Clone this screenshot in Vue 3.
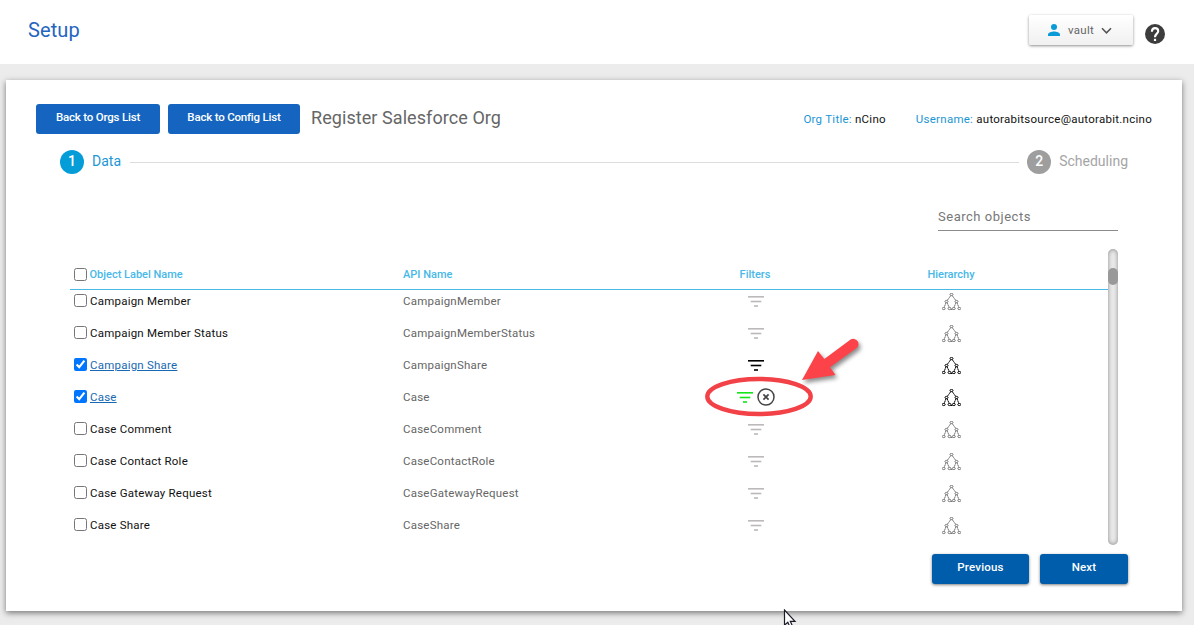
<script setup>
import { ref } from 'vue'

const search = ref('')
const rows = ref([
  { label: 'Campaign Member', api: 'CampaignMember', checked: false },
  { label: 'Campaign Member Status', api: 'CampaignMemberStatus', checked: false },
  { label: 'Campaign Share', api: 'CampaignShare', checked: true },
  { label: 'Case', api: 'Case', checked: true, filtered: true },
  { label: 'Case Comment', api: 'CaseComment', checked: false },
  { label: 'Case Contact Role', api: 'CaseContactRole', checked: false },
  { label: 'Case Gateway Request', api: 'CaseGatewayRequest', checked: false },
  { label: 'Case Share', api: 'CaseShare', checked: false },
])
const nodes = [[9.5, 1.5], [4.5, 8.5], [14.5, 8.5], [1.7, 15.5], [7.5, 15.5], [11.8, 15.5], [17.3, 15.5]]
</script>

<template>
  <div class="page">
    <header class="topbar">
      <h1 class="t-setup">Setup</h1>
      <div class="account">
        <button class="user">
          <svg class="person" width="12" height="12" viewBox="0 0 12 12"><circle cx="6" cy="3" r="3" fill="#0a9ad7" /><path d="M0 12V10.3C0 8.4 3.6 7.4 6 7.4S12 8.4 12 10.3V12Z" fill="#0a9ad7" /></svg>
          <span class="t-vault">vault</span>
          <svg width="11" height="8" viewBox="0 0 11 8"><path d="M1 1.3 5.5 5.8 10 1.3" fill="none" stroke="#555" stroke-width="1.6" /></svg>
        </button>
        <svg class="help" width="20" height="20" viewBox="0 0 20 20"><circle cx="10" cy="10" r="10" fill="#3d3d3d" /><path d="M6.9 7.8C6.9 5.3 8.2 4.1 10 4.1S13.2 5.4 13.2 7.2C13.2 9.6 10 9.8 10 13.2" fill="none" stroke="#fff" stroke-width="2.1" /><rect x="8.9" y="14.8" width="2.2" height="2.2" fill="#fff" /></svg>
      </div>
    </header>

    <main class="card">
      <div class="heading">
        <button class="btn orgs"><span>Back to Orgs List</span></button>
        <button class="btn config"><span>Back to Config List</span></button>
        <h2 class="t-title">Register Salesforce Org</h2>
        <p class="meta"><span class="t-org"><b>Org Title:</b> nCino</span><span class="t-username"><b>Username:</b> autorabitsource@autorabit.ncino</span></p>
      </div>

      <div class="steps">
        <span class="dot active">1</span><span class="step t-data">Data</span>
        <i class="line"></i>
        <span class="dot">2</span><span class="step muted t-sched">Scheduling</span>
      </div>

      <div class="search"><input v-model="search" placeholder="Search objects" /></div>

      <div class="list">
        <div class="table">
          <div class="row head">
            <div class="name"><input type="checkbox" /><span>Object Label Name</span></div>
            <div><span>API Name</span></div>
            <div class="mid"><span>Filters</span></div>
            <div class="mid"><span>Hierarchy</span></div>
          </div>
          <div v-for="r in rows" :key="r.api" class="row" :class="{ on: r.checked }">
            <div class="name"><input v-model="r.checked" type="checkbox" /><span class="label">{{ r.label }}</span></div>
            <div class="api"><span>{{ r.api }}</span></div>
            <div class="mid filter" :class="{ green: r.filtered }">
              <svg width="16" height="11" viewBox="0 0 16 11" fill="currentColor"><rect width="16" height="1.6" /><rect x="2.7" y="4.7" width="10.6" height="1.6" /><rect x="6" y="9.2" width="4" height="1.6" /></svg>
              <svg v-if="r.filtered" class="clear" width="18" height="18" viewBox="0 0 18 18"><circle cx="9" cy="9" r="8" fill="none" stroke="#444" stroke-width="1.5" /><path d="m6.4 6.4 5.2 5.2m0-5.2-5.2 5.2" stroke="#444" stroke-width="1.7" /></svg>
            </div>
            <div class="mid tree">
              <svg width="19" height="18" viewBox="0 0 19 18" fill="none" stroke="currentColor">
                <path d="M8.8 2.6 5.2 7.5M10.2 2.6 13.8 7.5M4 9.6 2.2 14.4M5 9.6 7.2 14.4M14 9.6 12 14.4M15 9.6 16.8 14.4M8.5 16.5H10.8" stroke-dasharray="1.7 .3" />
                <ellipse v-for="(n, i) in nodes" :key="i" :cx="n[0]" :cy="n[1]" rx="1.5" ry="1.1" stroke-width="1" />
              </svg>
            </div>
          </div>
        </div>
        <div class="scroll"><i></i></div>
      </div>

      <div class="actions">
        <button class="btn nav prev"><span>Previous</span></button>
        <button class="btn nav next"><span>Next</span></button>
      </div>
    </main>

    <svg class="callout" width="170" height="90" viewBox="700 332 170 90">
      <ellipse cx="759" cy="396.5" rx="51.7" ry="17.5" fill="none" stroke="#f24147" stroke-width="4.4" />
      <path class="arrow" d="M802 380 818 351 824.3 359 850.3 339.8A5.2 5.2 0 0 1 856.3 348.3L830 367.3 835.5 375Z" fill="#fc4349" />
    </svg>
    <svg class="cursor" width="14" height="20" viewBox="0 0 14 20"><path d="M1.5 1V16.2L4.8 13.2 7.4 19 9.8 17.8 7.3 12.3H12Z" fill="#fff" stroke="#1c1c28" stroke-width="1.2" /></svg>
  </div>
</template>

<style>
body { background: #ececec; overflow: hidden; }
</style>

<style scoped>
.page { position: relative; height: 625px; overflow: hidden; background: #ececec; font-family: Roboto, "Liberation Sans", sans-serif; font-size: 11.5px; line-height: 16px; color: #111; }
* { box-sizing: border-box; }
h1, h2, p { margin: 0; font-weight: 400; }
button, input { font: inherit; }
span { white-space: nowrap; }
.topbar { height: 64px; background: #fff; display: flex; justify-content: space-between; padding: 0 29px 0 28px; align-items: flex-start; }
.t-setup { font-size: 20px; line-height: 26px; color: #2465c0; padding-top: 17px; letter-spacing: .1px; }
.account { display: flex; gap: 12px; padding-top: 15px; }
.user { width: 104px; height: 30px; border: 0; border-radius: 2px; background: linear-gradient(#fff, #f0f0f0); box-shadow: 0 1px 3px rgba(0,0,0,.45); color: #666; display: flex; align-items: center; padding: 0 0 0 19px; }
.t-vault { margin: 0 7px 0 8px; letter-spacing: .3px; }
.user svg:last-child { margin-top: 2px; }
.help { margin-top: 9px; }
.card { height: 531px; margin: 16px 12px 0 6px; background: #fff; box-shadow: 0 2px 6px rgba(0,0,0,.5); padding: 24px 30px 0; }
.heading { display: flex; height: 30px; }
.btn { height: 30px; border: 0; border-radius: 3px; background: #1565c0; color: #fff; padding: 0 0 4px; font-weight: 500; text-align: center; }
.orgs { width: 124px; margin-right: 8px; letter-spacing: -.2px; }
.config { width: 132px; margin-right: 11px; letter-spacing: -.2px; }
.t-title { font-size: 18px; line-height: 28px; color: #666; letter-spacing: .07px; }
.meta { margin-left: auto; display: flex; gap: 30px; line-height: 30px; letter-spacing: .26px; }
.meta b { font-weight: 400; color: #1c96d4; }
.steps { display: flex; align-items: center; margin: 16px 24px 0; height: 24px; }
.dot { width: 24px; height: 24px; border-radius: 50%; background: #9e9e9e; color: #fff; font-size: 14px; line-height: 23px; font-weight: 500; text-align: center; }
.dot.active { background: #049dd8; }
.step { font-size: 14px; margin-left: 8px; padding-bottom: 2px; color: #1c96d4; }
.step.muted { color: #a5a5a5; }
.line { flex: 1; height: 1px; background: #ddd; margin: 1px 8px 0 9px; }
.search { display: flex; justify-content: flex-end; margin: 29px 34px 0 0; }
.search input { width: 180px; height: 28px; padding: 0 0 1px; border: 0; border-bottom: 1px solid #8c8c8c; outline: 0; font-size: 13px; letter-spacing: .52px; background: none; }
.search input::placeholder { color: #777; opacity: 1; }
.list { display: flex; margin: 18px 34px 0; height: 296px; }
.table { flex: 1; }
.row { display: grid; grid-template-columns: 333px 254px 196px 196px; height: 32px; padding-bottom: 10px; align-items: center; }
.head { height: 41px; padding: 11px 0 0; border-bottom: 1px solid #47b8e7; color: #47b8e7; font-weight: 500; font-size: 11px; }
.name { display: flex; align-items: center; padding-left: 3.5px; }
.name input { width: 13px; height: 13px; margin: 0 3.5px 1px 0; }
.head .name input { margin: 0 3px 1px 0; }
.label, .api { letter-spacing: .22px; }
.api { color: #666; }
.on .label { color: #1769b3; text-decoration: underline; text-underline-offset: 1px; }
.mid { display: flex; justify-content: center; align-items: center; }
.filter { color: #bdb9b9; height: 22px; padding-left: 1px; }
.on .filter { color: #000; }
.on .filter.green { color: #12e51a; gap: 4px; padding-left: 2px; }
.tree { color: #777; }
.on .tree { color: #000; }
.tree svg { margin-top: 2px; }
.scroll { width: 10px; height: 296px; border-radius: 5px; background: #ececec; box-shadow: inset 0 0 5px #888; padding-top: 19px; }
.scroll i { display: block; height: 17px; border-radius: 5px; background: #999; }
.actions { display: flex; justify-content: flex-end; gap: 11px; margin: 9px 24px 0; }
.nav { background: #005dab; box-shadow: 0 1px 3px rgba(0,0,0,.5); letter-spacing: .2px; }
.prev { width: 97px; }
.next { width: 88px; }
.callout { position: absolute; left: 700px; top: 332px; }
.arrow { filter: drop-shadow(2px 3px 2px rgba(0,0,0,.45)); }
.cursor { position: absolute; left: 783px; top: 609px; }
</style>
